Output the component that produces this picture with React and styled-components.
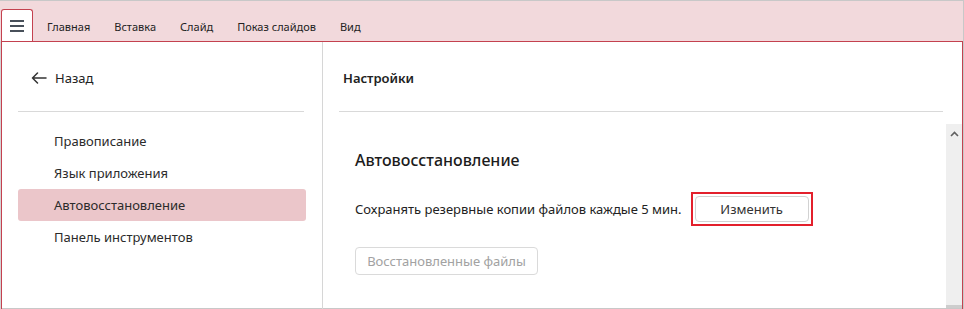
import React from "react";
import styled, { createGlobalStyle } from "styled-components";

const GlobalStyle = createGlobalStyle`
  html, body { margin: 0; padding: 0; background: #ffffff; }
  body { font-family: "Noto Sans", "Open Sans", sans-serif; color: #222; }
  * { box-sizing: border-box; }
`;

const Window = styled.div`
  width: 964px;
  height: 309px;
  display: flex;
  flex-direction: column;
  border-top: 1px solid #c8c8c8;
  border-right: 1px solid #c8c8c8;
  background: #d4d4d4;
  overflow: hidden;
`;

const Toolbar = styled.div`
  height: 40px;
  flex: none;
  display: flex;
  align-items: flex-end;
  background: #f2d9dc;
  padding-left: 1px;
`;

const MenuTab = styled.button`
  width: 32px;
  height: 32px;
  background: #ffffff;
  border: 1px solid #c4414f;
  border-bottom: none;
  border-radius: 3px 3px 0 0;
  padding: 0;
  display: flex;
  align-items: center;
  justify-content: center;
`;

const Tabs = styled.nav`
  display: flex;
  align-self: stretch;
  align-items: center;
  padding-left: 14px;
  gap: 24px;
  padding-top: 10px;
`;

const Tab = styled.span`
  font-size: 11px;
  color: #222;
  white-space: nowrap;
`;

const Frame = styled.div`
  flex: 1;
  display: flex;
  margin-left: 1px;
  background: #ffffff;
  border: 1px solid #c4414f;
  border-bottom: none;
  box-shadow: inset 0 -1px 0 #c8c8c8;
  min-height: 0;
`;

const Sidebar = styled.aside`
  width: 321px;
  flex: none;
  border-right: 1px solid #d6d6d6;
  padding: 0 16px 0 16px;
  display: flex;
  flex-direction: column;
`;

const BackRow = styled.div`
  height: 69px;
  display: flex;
  align-items: center;
  padding-left: 13px;
  padding-top: 2px;
  gap: 8px;
  font-size: 13px;
  color: #222;
`;

const Divider = styled.div`
  height: 1px;
  background: #d9d9d9;
  margin: ${(p) => p.$margin || "0"};
`;

const NavList = styled.ul`
  list-style: none;
  margin: 13px 0 0 0;
  padding: 0;
  display: flex;
  flex-direction: column;
`;

const NavItem = styled.li`
  height: 32px;
  display: flex;
  align-items: center;
  padding-left: 36px;
  border-radius: 3px;
  font-size: 13px;
  color: #2b2b2b;
  background: ${(p) => (p.$active ? "#ebc6ca" : "transparent")};
`;

const Main = styled.section`
  flex: 1;
  display: flex;
  flex-direction: column;
  min-width: 0;
`;

const MainHeader = styled.div`
  height: 69px;
  display: flex;
  align-items: center;
  padding-left: 20px;
  padding-top: 2px;
  font-size: 13px;
  font-weight: 600;
  color: #222;
  flex: none;
`;

const ScrollArea = styled.div`
  flex: 1;
  display: flex;
  margin-top: 12px;
  min-height: 0;
`;

const Content = styled.div`
  flex: 1;
  padding: 25px 0 0 32px;
  display: flex;
  flex-direction: column;
  align-items: flex-start;
`;

const SectionTitle = styled.h2`
  margin: 0;
  font-size: 16px;
  line-height: 22px;
  font-weight: 500;
  color: #1c1c1c;
`;

const Row = styled.div`
  display: flex;
  align-items: center;
  margin-top: 21px;
  gap: 9px;
  font-size: 13px;
  color: #222;
`;

const Marker = styled.div`
  border: 2px solid #e3202c;
  padding: 2px;
  display: flex;
`;

const Button = styled.button`
  font-family: inherit;
  font-size: 13px;
  height: ${(p) => p.$h || 26}px;
  width: ${(p) => p.$w}px;
  background: #ffffff;
  border: 1px solid ${(p) => (p.disabled ? "#dadada" : "#d2d2d2")};
  border-radius: 4px;
  color: ${(p) => (p.disabled ? "#a2a2a2" : "#333")};
  padding: 0;
`;

const Spacer = styled.div`
  height: ${(p) => p.$h}px;
`;

const Scrollbar = styled.div`
  width: 16px;
  flex: none;
  background: #efefef;
  display: flex;
  flex-direction: column;
  align-items: center;
  justify-content: space-between;
  padding-top: 7px;
  margin-bottom: 1px;
`;

const ScrollThumb = styled.div`
  width: 16px;
  height: 3px;
  background: #cdcdcd;
`;

const Hamburger = () => (
  <svg width="16" height="14" viewBox="0 0 16 14">
    <rect x="1" y="1" width="14" height="2" fill="#48505a" />
    <rect x="1" y="6" width="14" height="2" fill="#48505a" />
    <rect x="1" y="11" width="14" height="2" fill="#48505a" />
  </svg>
);

const BackArrow = () => (
  <svg width="16" height="12" viewBox="0 0 16 12">
    <path
      d="M15 6 H1.5 M6.5 1 L1.5 6 L6.5 11"
      fill="none"
      stroke="#333"
      strokeWidth="1.5"
      strokeLinecap="round"
      strokeLinejoin="round"
    />
  </svg>
);

const UpChevron = () => (
  <svg width="9" height="6" viewBox="0 0 9 6">
    <path d="M1 5 L4.5 1.5 L8 5" fill="none" stroke="#606060" strokeWidth="1.6" />
  </svg>
);

const tabs = ["Главная", "Вставка", "Слайд", "Показ слайдов", "Вид"];
const items = ["Правописание", "Язык приложения", "Автовосстановление", "Панель инструментов"];

export default function App() {
  return (
    <>
      <GlobalStyle />
      <Window>
        <Toolbar>
          <MenuTab aria-label="Меню">
            <Hamburger />
          </MenuTab>
          <Tabs>
            {tabs.map((t) => (
              <Tab key={t}>{t}</Tab>
            ))}
          </Tabs>
        </Toolbar>
        <Frame>
          <Sidebar>
            <BackRow>
              <BackArrow />
              <span>Назад</span>
            </BackRow>
            <Divider $margin="0 2px 0 0" />
            <NavList>
              {items.map((it) => (
                <NavItem key={it} $active={it === "Автовосстановление"}>
                  {it}
                </NavItem>
              ))}
            </NavList>
          </Sidebar>
          <Main>
            <MainHeader>Настройки</MainHeader>
            <Divider $margin="0 19px 0 16px" />
            <ScrollArea>
              <Content>
                <SectionTitle>Автовосстановление</SectionTitle>
                <Row>
                  <span>Сохранять резервные копии файлов каждые 5 мин.</span>
                  <Marker>
                    <Button $w={114}>Изменить</Button>
                  </Marker>
                </Row>
                <Spacer $h={21} />
                <Button $w={183} $h={28} disabled>
                  Восстановленные файлы
                </Button>
              </Content>
              <Scrollbar>
                <UpChevron />
                <ScrollThumb />
              </Scrollbar>
            </ScrollArea>
          </Main>
        </Frame>
      </Window>
    </>
  );
}
